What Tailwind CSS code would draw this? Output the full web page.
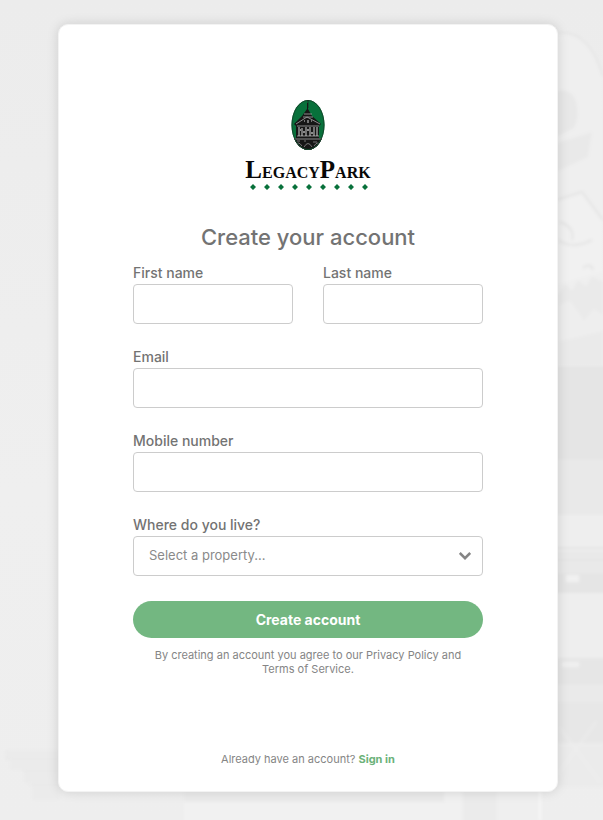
<!DOCTYPE html>
<html lang="en">
<head>
  <meta charset="UTF-8" />
  <meta name="viewport" content="width=device-width, initial-scale=1.0"/>
  <title>Create your account</title>
  <script src="https://cdn.jsdelivr.net/npm/@tailwindcss/browser@4"></script>
</head>
<body class="relative min-h-screen overflow-x-hidden bg-[#ececec] pt-6 pr-0 pb-7 pl-[13px] font-['Inter','Open_Sans',sans-serif] text-[#737373]">
  <!-- faded backdrop -->
  <svg class="absolute inset-0 h-full w-full" viewBox="0 0 603 820" preserveAspectRatio="none" aria-hidden="true">
    <defs>
      <linearGradient id="sky" x2="0" y2="1">
        <stop offset="0" stop-color="#ececec"/>
        <stop offset=".6" stop-color="#efefef"/>
        <stop offset="1" stop-color="#eeeeee"/>
      </linearGradient>
      <filter id="soft"><feGaussianBlur stdDeviation="1.5"/></filter>
    </defs>
    <rect width="603" height="820" fill="url(#sky)"/>
    <g filter="url(#soft)">
      <path d="M550 30Q590 25 603 70V365H550Z" fill="#efefef"/>
      <path d="M550 34Q588 24 603 76" fill="none" stroke="#e8e8e8" stroke-width="3"/>
      <path d="M550 93q20-8 26 8q4 16-2 27l-24 12Z" fill="#e8e8e8"/>
      <path d="M550 145l42-13-4 25-38 18Z" fill="#e9e9e9"/>
      <path d="M550 202l32-10 21 30v50l-53 15Z" fill="#f1f1f1"/>
      <path d="M550 202l32-10 21 28M558 240q14 10 34 0M560 222q15 5 12 18M583 268q8-6 10 2" fill="none" stroke="#e4e4e4" stroke-width="2"/>
      <path d="M550 286l8 8 7-10 7 6 6-10 8 6 6-10 11 6v83h-53Z" fill="#eaeaea"/>
      <path d="M560 305l10-4 14 20 10-12 9 6v16l-43 10Z" fill="#eeeeee"/>
      <path d="M550 366h60v150h-60Z" fill="#e5e5e5"/>
      <path d="M550 460h60v115h-60Z" fill="#e9e9e9"/>
      <path d="M550 515h60v36h-60Z" fill="#eeeeee"/>
      <path d="M550 548h60M550 560h60" stroke="#e4e4e4" stroke-width="2"/>
      <path d="M550 573h60v20h-60Z" fill="#e5e5e5"/>
      <path d="M566 575h13v7h-13Z" fill="#f1f1f1"/>
      <path d="M550 595h60v70h-60Z" fill="#eeeeee"/>
      <path d="M550 658h60v27h-60Z" fill="#e6e6e6"/>
      <path d="M562 662h17v5h-17Z" fill="#f0f0f0"/>
      <path d="M550 685h60v17h-60Z" fill="#eaeaea"/>
      <path d="M550 702h60v85h-60Z" fill="#e7e7e7"/>
      <path d="M550 744h60v43h-60Z" fill="#ebebeb"/>
      <path d="M560 728l40 54M596 722l-38 52M558 744h45" stroke="#f0f0f0" fill="none"/>
      <path d="M5 750h55v50H32v-17H24V770H10V760H5Z" fill="#ebebeb"/>
      <path d="M5 759h55M22 771h40M28 785h34" stroke="#e7e7e7"/>
      <path d="M184 790h278v40H184Z" fill="#f1f1f1"/>
      <path d="M184 790h260v12H184Z" fill="#ebebeb"/>
      <path d="M463 790h34v40h-34Z" fill="#ebebeb"/>
      <path d="M497 790h45v40h-45Z" fill="#efefef"/>
      <path d="M540 790v30" stroke="#f8f8f8" stroke-width="2"/>
    </g>
  </svg>

  <main class="relative mx-auto flex max-w-[500px] flex-col rounded-[10px] border border-[#f3f3f3] bg-white px-[74px] pt-[74px] pb-[22px] shadow-[0_0_12px_rgba(0,0,0,0.13)]">
    <svg class="mx-auto h-[94px] w-[130px]" viewBox="0 0 130 94" role="img" aria-label="Legacy Park">
      <clipPath id="oval"><ellipse cx="65" cy="26" rx="16.5" ry="25"/></clipPath>
      <ellipse cx="65" cy="26" rx="16.5" ry="25" fill="#08713b"/>
      <g clip-path="url(#oval)">
        <path d="M64 4h1v6l4 7 9 8-2 2v13h6v14H48V39h5V27l-2-2 8-8 5-7Z" fill="#161616"/>
        <path d="M48 39h34v14H48Z" fill="#161616"/>
        <path d="M61 15h8M60 18h10M53 25l11-7 13 7M54 27h22M54 37h22M51 40h29" stroke="#a8a8a8" fill="none" stroke-width=".8"/>
        <path d="M56 28v9M59 29v8M63 28v9M67 28v9M71 28v9M74 28v9M61 22h1M65 21v3M68 22h1" stroke="#d2d2d2" stroke-width="1"/>
        <path d="M60 33h2M64 31h2M68 34h2M57 31h1" stroke="#ffffff"/>
        <path d="M52 47q3-6 7 0M61 48q4-7 8 0M71 47q4-6 7 0M54 42h3M61 42h2M70 43h4" stroke="#808080" fill="none" stroke-width=".9"/>
      </g>
      <ellipse cx="65" cy="26" rx="16" ry="24.5" fill="none" stroke="#14482c"/>
      <path d="M65 1v8" stroke="#1b1b1b" stroke-width=".7"/>
      <text x="65" y="79" text-anchor="middle" font-family="Liberation Serif, serif" font-weight="700" font-size="16" fill="#080808"><tspan font-size="25">L</tspan>EGACY<tspan font-size="25">P</tspan>ARK</text>
      <path d="M10 85l3 3-3 3-3-3ZM24 85l3 3-3 3-3-3ZM38 85l3 3-3 3-3-3ZM52 85l3 3-3 3-3-3ZM66 85l3 3-3 3-3-3ZM80 85l3 3-3 3-3-3ZM94 85l3 3-3 3-3-3ZM108 85l3 3-3 3-3-3ZM122 85l3 3-3 3-3-3Z" fill="#08713b"/>
    </svg>

    <h1 class="mt-7 text-center text-[22px] leading-8 font-medium">Create your account</h1>

    <form class="mt-2">
      <div class="grid grid-cols-2 gap-x-[30px]">
        <div>
          <label for="first" class="block text-sm leading-[23px] font-medium">First name</label>
          <input id="first" type="text" class="block h-10 w-full rounded border border-[#cccccc] bg-white px-4 text-[13px]"/>
        </div>
        <div>
          <label for="last" class="block text-sm leading-[23px] font-medium">Last name</label>
          <input id="last" type="text" class="block h-10 w-full rounded border border-[#cccccc] bg-white px-4 text-[13px]"/>
        </div>
      </div>
      <label for="email" class="mt-[21px] block text-sm leading-[23px] font-medium">Email</label>
      <input id="email" type="email" class="block h-10 w-full rounded border border-[#cccccc] bg-white px-4 text-[13px]"/>
      <label for="mobile" class="mt-[21px] block text-sm leading-[23px] font-medium">Mobile number</label>
      <input id="mobile" type="tel" class="block h-10 w-full rounded border border-[#cccccc] bg-white px-4 text-[13px]"/>
      <label for="property" class="mt-[21px] block text-sm leading-[23px] font-medium">Where do you live?</label>
      <div class="relative">
        <select id="property" class="block h-10 w-full appearance-none rounded border border-[#cccccc] bg-white px-[15px] text-[13px] text-[#8a8a8a]">
          <option>Select a property...</option>
        </select>
        <svg class="pointer-events-none absolute top-4 right-3 h-2 w-3" viewBox="0 0 12 8" fill="none" stroke="#858585" stroke-width="2.5" aria-hidden="true"><path d="M.8 1L6 6.200 11.200 1"/></svg>
      </div>
      <button type="submit" class="mt-[25px] block h-[37px] w-full rounded-full bg-[#73b781] text-sm font-bold text-white">Create account</button>
    </form>

    <p class="mt-[10px] px-4 text-center text-[11px] leading-[14px] text-[#858585]">By creating an account you agree to our Privacy Policy and Terms of Service.</p>
    <p class="mt-[73px] text-center text-[11px] leading-5 text-[#858585]">Already have an account? <a href="#" class="font-bold text-[#6bb279]">Sign in</a></p>
  </main>
</body>
</html>
